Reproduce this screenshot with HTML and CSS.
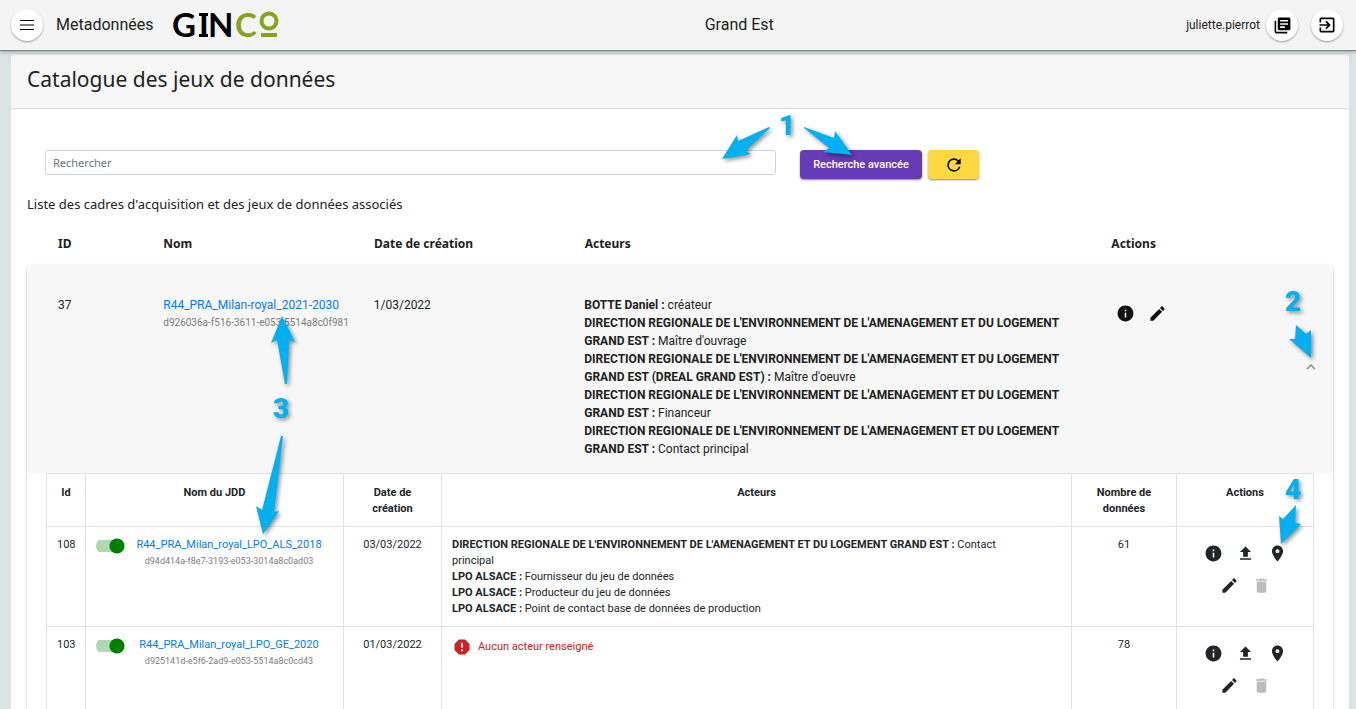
FILE: index.html
```html
<!DOCTYPE html>
<html lang="fr">
<head>
<meta charset="utf-8">
<title>Metadonnées - GINCO</title>
<link rel="stylesheet" href="styles.css">
</head>
<body>
<svg class="symbols" aria-hidden="true">
  <symbol id="i-info" viewBox="0 0 24 24"><path d="M12 2C6.48 2 2 6.48 2 12s4.480 10 10 10 10-4.480 10-10S17.520 2 12 2zm1 15h-2v-6h2v6zm0-8h-2V7h2v2z"/></symbol>
  <symbol id="i-edit" viewBox="0 0 24 24"><path d="M3 17.250V21h3.750L17.810 9.940l-3.750-3.750L3 17.250zM20.710 7.040c.39-.39.39-1.020 0-1.410l-2.340-2.340c-.39-.39-1.020-.39-1.410 0l-1.830 1.830 3.750 3.750 1.830-1.830z"/></symbol>
  <symbol id="i-upload" viewBox="0 0 24 24"><path d="M5 20h14v-2H5v2zM5 10h4v6h6v-6h4l-7-7-7 7z"/></symbol>
  <symbol id="i-place" viewBox="0 0 24 24"><path d="M12 2C8.130 2 5 5.130 5 9c0 5.250 7 13 7 13s7-7.750 7-13c0-3.870-3.130-7-7-7zm0 9.500a2.500 2.500 0 1 1 0-5 2.500 2.500 0 0 1 0 5z"/></symbol>
  <symbol id="i-delete" viewBox="0 0 24 24"><path d="M6 19c0 1.100.9 2 2 2h8c1.100 0 2-.9 2-2V7H6v12zM19 4h-3.500l-1-1h-5l-1 1H5v2h14V4z"/></symbol>
  <symbol id="i-refresh" viewBox="0 0 24 24"><path d="M17.650 6.350A7.958 7.958 0 0 0 12 4a8 8 0 1 0 7.730 10h-2.080A6 6 0 1 1 12 6c1.660 0 3.140.69 4.220 1.780L13 11h7V4l-2.350 2.350z"/></symbol>
  <symbol id="i-books" viewBox="0 0 24 24"><path d="M4 6H2v14c0 1.100.9 2 2 2h14v-2H4V6zm16-4H8c-1.100 0-2 .9-2 2v12c0 1.100.9 2 2 2h12c1.100 0 2-.9 2-2V4c0-1.100-.9-2-2-2zm-1 9H9V9h10v2zm-4 4H9v-2h6v2zm4-8H9V5h10v2z"/></symbol>
  <symbol id="i-exit" viewBox="0 0 24 24"><path d="M10.090 15.590L11.500 17l5-5-5-5-1.410 1.410L12.670 11H3v2h9.670l-2.580 2.590zM19 3H5a2 2 0 0 0-2 2v4h2V5h14v14H5v-4H3v4a2 2 0 0 0 2 2h14c1.100 0 2-.9 2-2V5c0-1.100-.9-2-2-2z"/></symbol>
  <symbol id="i-error" viewBox="0 0 24 24"><path d="M15.730 3H8.270L3 8.270v7.460L8.270 21h7.460L21 15.730V8.270L15.730 3zM12 17.300a1.300 1.300 0 1 1 0-2.600 1.300 1.300 0 0 1 0 2.600zM13 13h-2V7h2v6z"/></symbol>
</svg>

<header class="topbar">
  <div class="topbar-side">
    <button class="round-button" type="button" aria-label="Menu"><svg viewBox="0 0 16 16" width="16" height="16"><path d="M1 3.500h14M1 8h14M1 12.500h14" stroke="#000" stroke-width="1"/></svg></button>
    <span class="module-name">Metadonnées</span>
    <svg class="logo" width="108" height="30" viewBox="0 0 108 30" role="img" aria-label="GINCO">
      <text x="-1" y="27" class="logo-dark">G</text>
      <text x="26" y="27" class="logo-dark">I</text>
      <path d="M26 3h9v3h-9zM26 24h9v3h-9z"/>
      <text x="35" y="27" class="logo-dark">N</text>
      <text x="62" y="27" class="logo-green">C</text>
      <circle cx="96" cy="11" r="7.500" class="logo-ring"/>
      <path d="M88 23h16v4H88z" class="logo-bar"/>
    </svg>
  </div>
  <div class="region-name">Grand Est</div>
  <div class="topbar-side topbar-user">
    <span class="user-name">juliette.pierrot</span>
    <button class="round-button" type="button" aria-label="Catalogue"><svg width="19" height="19"><use href="#i-books"/></svg></button>
    <button class="round-button exit-button" type="button" aria-label="Déconnexion"><svg width="20" height="20"><use href="#i-exit"/></svg></button>
  </div>
</header>

<main class="card">
  <h1 class="card-title">Catalogue des jeux de données</h1>
  <div class="card-body">
    <form class="search">
      <input class="search-input" type="text" placeholder="Rechercher" aria-label="Rechercher">
      <button class="button advanced" type="button">Recherche avancée</button>
      <button class="button refresh" type="button" aria-label="Actualiser"><svg width="20" height="20"><use href="#i-refresh"/></svg></button>
    </form>
    <p class="caption">Liste des cadres d'acquisition et des jeux de données associés</p>

    <div class="grid grid-head">
      <div>ID</div><div>Nom</div><div>Date de création</div><div>Acteurs</div><div>Actions</div>
    </div>

    <section class="panel">
      <div class="panel-head">
        <div class="grid">
          <div>37</div>
          <div><a href="#cadre-37">R44_PRA_Milan-royal_2021-2030</a><div class="uuid">d926036a-f516-3611-e053-5514a8c0f981</div></div>
          <div>1/03/2022</div>
          <div>
            <div><b>BOTTE Daniel :</b> créateur</div>
            <div><b>DIRECTION REGIONALE DE L'ENVIRONNEMENT DE L'AMENAGEMENT ET DU LOGEMENT GRAND EST :</b> Maître d'ouvrage</div>
            <div><b>DIRECTION REGIONALE DE L'ENVIRONNEMENT DE L'AMENAGEMENT ET DU LOGEMENT GRAND EST (DREAL GRAND EST) :</b> Maître d'oeuvre</div>
            <div><b>DIRECTION REGIONALE DE L'ENVIRONNEMENT DE L'AMENAGEMENT ET DU LOGEMENT GRAND EST :</b> Financeur</div>
            <div><b>DIRECTION REGIONALE DE L'ENVIRONNEMENT DE L'AMENAGEMENT ET DU LOGEMENT GRAND EST :</b> Contact principal</div>
          </div>
          <div class="head-actions">
            <button class="icon-button" type="button" aria-label="Informations"><svg><use href="#i-info"/></svg></button>
            <button class="icon-button" type="button" aria-label="Modifier"><svg><use href="#i-edit"/></svg></button>
          </div>
        </div>
        <button class="chevron" type="button" aria-label="Replier"><svg width="10" height="6" viewBox="0 0 10 6"><path d="M1 5l4-4 4 4" fill="none" stroke="#8a8a8a" stroke-width="1.500"/></svg></button>
      </div>

      <div class="panel-body">
        <table class="datasets">
          <colgroup><col class="c-id"><col class="c-name"><col class="c-date"><col><col class="c-count"><col class="c-actions"></colgroup>
          <thead>
            <tr><th>Id</th><th>Nom du JDD</th><th>Date de création</th><th>Acteurs</th><th>Nombre de données</th><th>Actions</th></tr>
          </thead>
          <tbody>
            <tr>
              <td>108</td>
              <td><div class="dataset"><input class="toggle" type="checkbox" checked aria-label="Activer le jeu 108"><div class="dataset-name"><a href="#jdd-108">R44_PRA_Milan_royal_LPO_ALS_2018</a><div class="uuid">d94d414a-f8e7-3193-e053-3014a8c0ad03</div></div></div></td>
              <td>03/03/2022</td>
              <td class="actors">
                <div><b>DIRECTION REGIONALE DE L'ENVIRONNEMENT DE L'AMENAGEMENT ET DU LOGEMENT GRAND EST :</b> Contact principal</div>
                <div><b>LPO ALSACE :</b> Fournisseur du jeu de données</div>
                <div><b>LPO ALSACE :</b> Producteur du jeu de données</div>
                <div><b>LPO ALSACE :</b> Point de contact base de données de production</div>
              </td>
              <td>61</td>
              <td><div class="row-actions">
                <button class="icon-button" type="button" aria-label="Informations"><svg><use href="#i-info"/></svg></button>
                <button class="icon-button" type="button" aria-label="Importer"><svg><use href="#i-upload"/></svg></button>
                <button class="icon-button" type="button" aria-label="Localiser"><svg><use href="#i-place"/></svg></button>
                <button class="icon-button" type="button" aria-label="Modifier"><svg><use href="#i-edit"/></svg></button>
                <button class="icon-button" type="button" aria-label="Supprimer" disabled><svg><use href="#i-delete"/></svg></button>
              </div></td>
            </tr>
            <tr>
              <td>103</td>
              <td><div class="dataset"><input class="toggle" type="checkbox" checked aria-label="Activer le jeu 103"><div class="dataset-name"><a href="#jdd-103">R44_PRA_Milan_royal_LPO_GE_2020</a><div class="uuid">d925141d-e5f6-2ad9-e053-5514a8c0cd43</div></div></div></td>
              <td>01/03/2022</td>
              <td class="actors"><div class="missing"><svg width="20" height="20"><use href="#i-error"/></svg><span>Aucun acteur renseigné</span></div></td>
              <td>78</td>
              <td><div class="row-actions">
                <button class="icon-button" type="button" aria-label="Informations"><svg><use href="#i-info"/></svg></button>
                <button class="icon-button" type="button" aria-label="Importer"><svg><use href="#i-upload"/></svg></button>
                <button class="icon-button" type="button" aria-label="Localiser"><svg><use href="#i-place"/></svg></button>
                <button class="icon-button" type="button" aria-label="Modifier"><svg><use href="#i-edit"/></svg></button>
                <button class="icon-button" type="button" aria-label="Supprimer" disabled><svg><use href="#i-delete"/></svg></button>
              </div></td>
            </tr>
          </tbody>
        </table>
      </div>
    </section>
  </div>
</main>

<svg class="callouts" width="1356" height="709" viewBox="0 0 1356 709">
  <path d="M769 127L738 141 737 135 722 159 751 154 745 151 770 128z"/>
  <path d="M804 127L834 138 835 131 852 155 823 152 829 148 804 128z"/>
  <path d="M282 316L295 342 289 340 287 384H285L277 340 271 343z"/>
  <path d="M281 436L283 436 274 512 279 511 263 534 256 506 262 510z"/>
  <path d="M1296 325L1306 334 1311 330V358L1289 339 1295 339z"/>
  <path d="M1296 505L1295 523 1301 524 1281 544 1279 516 1283 519z"/>
  <text x="787" y="135">1</text>
  <text x="1293" y="311">2</text>
  <text x="281" y="418">3</text>
  <text x="1293" y="499">4</text>
</svg>
</body>
</html>
```
FILE: styles.css
```css
* { box-sizing: border-box; }

body {
  margin: 0;
  height: 100vh;
  overflow: hidden;
  display: flex;
  flex-direction: column;
  background: #dbe3e6;
  color: #212121;
  font: 12px/18px Roboto, sans-serif;
}

.symbols { display: none; }
button, input { font: inherit; }
button { border: 0; padding: 0; cursor: pointer; }
a { color: #007bff; text-decoration: none; }

.topbar {
  flex: none;
  display: flex;
  justify-content: space-between;
  align-items: center;
  height: 50px;
  padding: 0 13px 0 11px;
  background: #f4f4f4;
  box-shadow: 0 1px 1px #7f888b, 0 2px 4px #a5adb0;
  position: relative;
}
.topbar-side { display: flex; align-items: center; }
.topbar-user { gap: 6px; }
.exit-button { margin-left: 7px; }
.round-button {
  display: flex;
  align-items: center;
  justify-content: center;
  width: 32px;
  height: 32px;
  border-radius: 50%;
  background: #fff;
  box-shadow: 0 1px 2px #999;
}
.module-name { margin: 0 20px 0 13px; font-size: 16px; }
.region-name { font-size: 16px; }
.user-name { font-size: 12px; }

.logo { margin-right: 11px; overflow: visible; }
.logo-dark, .logo-green { font: 700 33px Lato, sans-serif; }
.logo-green { fill: #8aa31a; }
.logo-ring { fill: none; stroke: #8aa31a; stroke-width: 4; }
.logo-bar { fill: #8aa31a; }

.card {
  flex: 1;
  margin: 5px 7px 0 11px;
  background: #fff;
  border-radius: 4px 4px 0 0;
  overflow: hidden;
}
.card-title {
  margin: 0;
  padding: 9px 16px 14px;
  border-bottom: 1px solid #d8d8d8;
  background: #f7f7f7;
  font: 400 21px/30px "Noto Sans", sans-serif;
}
.card-body { padding: 41px 16px 0; }

.search {
  display: flex;
  align-items: flex-start;
  padding: 0 354px 0 18px;
}
.search-input {
  flex: 1;
  height: 25px;
  margin-right: 24px;
  padding: 0 7px;
  border: 1px solid #ced4da;
  border-radius: 3px;
  font: 11px "Noto Sans", sans-serif;
}
.search-input::placeholder { color: #6c757d; }
.button {
  height: 29px;
  border-radius: 4px;
  box-shadow: 0 1px 2px #888;
}
.advanced {
  width: 122px;
  margin-right: 6px;
  background: #673ab7;
  color: #fff;
  font-size: 11px;
  font-weight: 500;
}
.refresh {
  display: flex;
  align-items: center;
  justify-content: center;
  width: 51px;
  background: #ffd740;
}

.caption { margin: 15px 0 0; font: 13px/20px "Noto Sans", sans-serif; }

.grid {
  flex: 1;
  display: grid;
  grid-template-columns: 1fr 2fr 2fr 5fr 2fr;
}
.grid > div { padding: 0 15px; min-width: 0; }
.grid-head {
  margin: 21px 26px 12px 16px;
  font: 700 12px/18px "Noto Sans", sans-serif;
}

.panel {
  height: 600px;
  border-radius: 4px;
  box-shadow: 0 1px 3px #bbb;
}
.panel-head {
  display: flex;
  align-items: center;
  padding: 31px 17px 15px 16px;
  border-radius: 4px;
  background: #f7f7f7;
}
.chevron { display: flex; padding-bottom: 20px; background: none; }
.uuid { color: #7d7d7d; font-size: 10px; white-space: nowrap; }
.head-actions { display: flex; gap: 2px; }
.icon-button {
  display: flex;
  align-items: center;
  justify-content: center;
  width: 32px;
  height: 32px;
  background: none;
  color: #212529;
}
.icon-button svg { width: 19px; height: 19px; fill: currentColor; }
.icon-button:disabled { color: #bcbcbc; }
.head-actions .icon-button { width: 30px; height: 34px; color: #111; }

.panel-body { padding: 0 19px; }
.datasets {
  width: 100%;
  table-layout: fixed;
  border-collapse: collapse;
  color: #212529;
  font-size: 11px;
  line-height: 16px;
  text-align: center;
}
.c-id { width: 39px; }
.c-name { width: 258px; }
.c-date { width: 98px; }
.c-count { width: 105px; }
.c-actions { width: 137px; }
.datasets th, .datasets td {
  padding: 11px 10px 9px;
  border: 1px solid #dee2e6;
  vertical-align: top;
}
.datasets td { height: 100px; padding-top: 10px; }
.datasets .actors { padding-right: 32px; text-align: left; }
.datasets .uuid { font-size: 9px; }
.dataset { display: flex; align-items: flex-start; }
.dataset-name { flex: 1; }
.toggle {
  appearance: none;
  width: 29px;
  height: 16px;
  margin: 1px 0 0;
  border-radius: 8px;
  background:
    radial-gradient(circle at 21px 8px, #008000 7px, transparent 8px),
    linear-gradient(#add8b0, #add8b0) 0 2px / 24px 12px no-repeat;
}
.row-actions {
  display: flex;
  flex-wrap: wrap;
  justify-content: center;
  width: 96px;
  margin: 0 auto;
}
.missing { display: flex; align-items: center; gap: 6px; color: #cd2026; }
.missing svg { fill: #cd2026; }

.callouts {
  position: absolute;
  top: 0;
  left: 0;
  pointer-events: none;
  filter: drop-shadow(2px 2px 2px rgba(0, 0, 0, 0.45));
  fill: #00b0f0;
}
.callouts text {
  font: 900 28px Roboto, sans-serif;
  text-anchor: middle;
}
```
